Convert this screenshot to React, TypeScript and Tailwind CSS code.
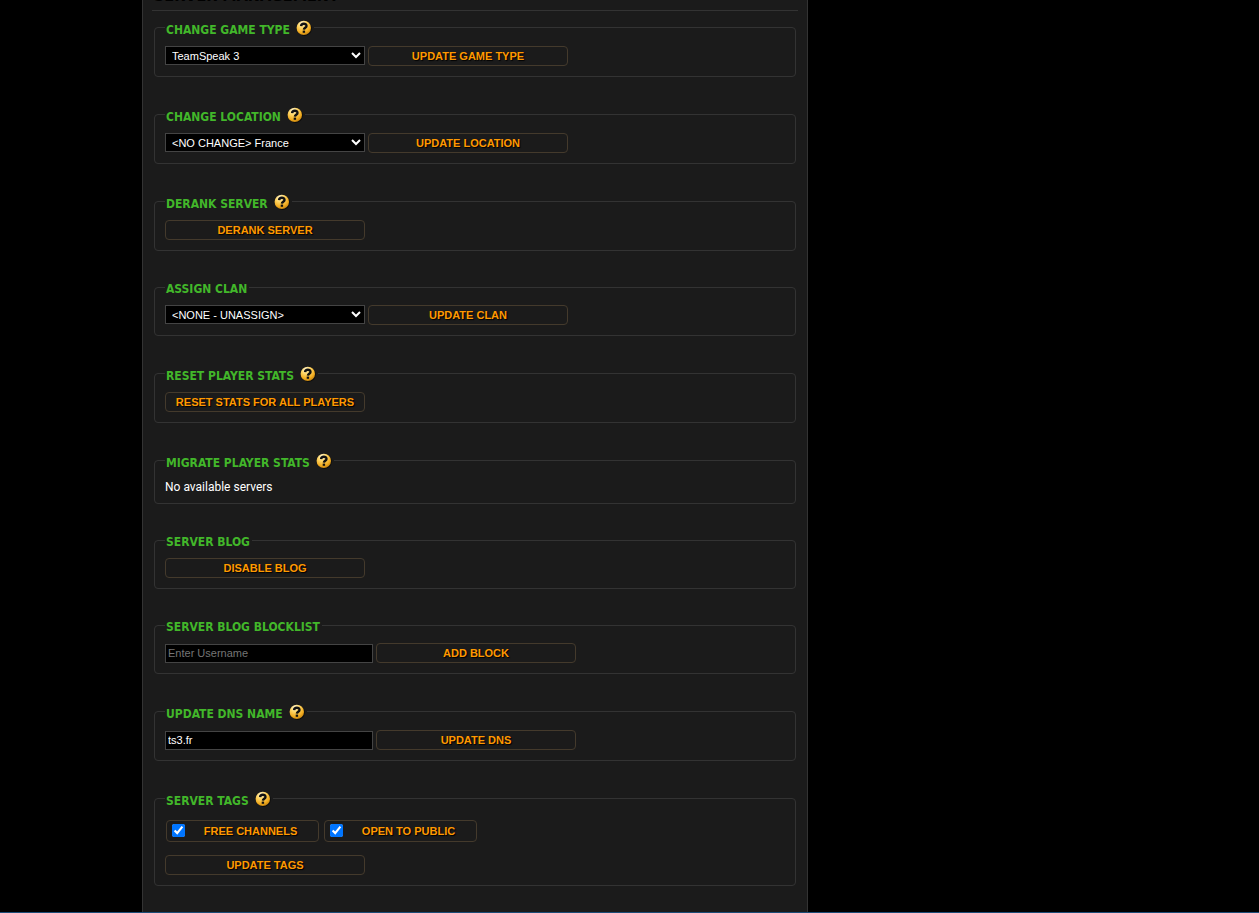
import {ReactNode, useState} from "react";

type SectionProps = {
    title: string;
    help?: boolean;
    children: ReactNode;
}

const HelpIcon = () => (
    <svg className="h-4 w-4 shrink-0" viewBox="0 0 16 16" role="img" aria-label="Help">
        <defs>
            <radialGradient id="help-gold" cx="38%" cy="20%" r="85%">
                <stop offset="0" stopColor="#fff6d8"/>
                <stop offset="0.35" stopColor="#ffd768"/>
                <stop offset="0.75" stopColor="#f0a91c"/>
                <stop offset="1" stopColor="#b87a10"/>
            </radialGradient>
        </defs>
        <circle cx="8.5" cy="8.7" r="7.2" fill="#000" opacity="0.6"/>
        <circle cx="7.8" cy="7.9" r="7.2" fill="url(#help-gold)"/>
        <path d="M5.1 6.1 C5.2 2.9 10.6 2.9 10.5 6 C10.5 7.7 8 7.8 7.9 9.6" fill="none" stroke="#111" strokeWidth="2.4"/>
        <rect x="6.7" y="10.6" width="2.4" height="2.2" fill="#111"/>
    </svg>
);

const Section = ({title, help, children}: SectionProps) => (
    <fieldset className="min-w-0 rounded-[4px] border border-[#333] px-[10px] py-[10px]">
        {help ? (
            <legend className="px-px">
                <span className="flex h-[17px] items-center gap-[6px] pr-px">
                    <span className="pt-[4px] font-['DejaVu_Sans_Condensed','DejaVu_Sans',sans-serif] text-[12px] leading-[14px] font-bold text-[#42b72a]">{title}</span>
                    <HelpIcon/>
                </span>
            </legend>
        ) : (
            <legend className="px-px">
                <span className="flex h-[15px] items-center pt-[2px] pr-px font-['DejaVu_Sans_Condensed','DejaVu_Sans',sans-serif] text-[12px] leading-[14px] font-bold text-[#42b72a]">{title}</span>
            </legend>
        )}
        {children}
    </fieldset>
);

const ActionButton = ({children}: {children: ReactNode}) => (
    <button type="button" className="h-5 w-[200px] rounded-[4px] border border-[#443a2c] text-[11px] leading-[18px] font-bold text-[#ff9900] [text-shadow:1px_1px_1px_#000] hover:bg-[#252525]">
        {children}
    </button>
);

const SelectBox = ({label, options}: {label: string; options: string[]}) => (
    <select aria-label={label} className="h-[19px] w-[200px] border border-[#444] bg-black px-[2px] text-[11px] text-white">
        {options.map(option => <option key={option}>{option}</option>)}
    </select>
);

const TextBox = ({label, placeholder, value}: {label: string; placeholder?: string; value?: string}) => (
    <input type="text" aria-label={label} placeholder={placeholder} defaultValue={value} className="h-[19px] w-[208px] border border-[#444] bg-black px-[2px] pb-[2px] text-[11px] text-white placeholder:text-[#757575]"/>
);

const TagBox = ({name}: {name: string}) => {
    const [checked, setChecked] = useState(true);

    return (
        <label className="flex h-[22px] w-[153px] items-center rounded-[4px] border border-[#443a2c] pr-[2px] pl-[5px]">
            <input type="checkbox" checked={checked} onChange={e => setChecked(e.target.checked)} className="mb-[2px] h-[13px] w-[13px]"/>
            <span className="flex-1 text-center text-[11px] leading-[18px] font-bold text-[#ff9900] [text-shadow:1px_1px_1px_#000]">{name}</span>
        </label>
    );
};

const App = () => {
    return (
        <div className="flex min-h-screen flex-col overflow-hidden border-b border-[#1c4d78] bg-black font-['Liberation_Sans',Arial,sans-serif]">
            <main className="w-full max-w-[666px] flex-1 border-x border-[#333] bg-[#1b1b1b] px-[9px] pb-[26px] md:ml-[142px]">
                <h1 className="-mt-[13px] border-b border-[#333] pb-[5px] pl-[2px] font-['DejaVu_Sans_Condensed','DejaVu_Sans',sans-serif] text-[16px] leading-[18px] font-bold text-black">SERVER MANAGEMENT</h1>

                <div className="flex flex-col gap-[29px] px-[2px] pt-2">
                    <Section title="CHANGE GAME TYPE" help>
                        <div className="flex items-start gap-[3px]">
                            <SelectBox label="Game type" options={["TeamSpeak 3"]}/>
                            <ActionButton>UPDATE GAME TYPE</ActionButton>
                        </div>
                    </Section>

                    <Section title="CHANGE LOCATION" help>
                        <div className="flex items-start gap-[3px]">
                            <SelectBox label="Location" options={["<NO CHANGE> France"]}/>
                            <ActionButton>UPDATE LOCATION</ActionButton>
                        </div>
                    </Section>

                    <Section title="DERANK SERVER" help>
                        <div className="flex">
                            <ActionButton>DERANK SERVER</ActionButton>
                        </div>
                    </Section>

                    <Section title="ASSIGN CLAN">
                        <div className="flex items-start gap-[3px]">
                            <SelectBox label="Clan" options={["<NONE - UNASSIGN>"]}/>
                            <ActionButton>UPDATE CLAN</ActionButton>
                        </div>
                    </Section>

                    <Section title="RESET PLAYER STATS" help>
                        <div className="flex">
                            <ActionButton>RESET STATS FOR ALL PLAYERS</ActionButton>
                        </div>
                    </Section>

                    <Section title="MIGRATE PLAYER STATS" help>
                        <p className="pt-[2px] font-[Roboto,sans-serif] text-[12px] leading-[12px] text-white">No available servers</p>
                    </Section>

                    <Section title="SERVER BLOG">
                        <div className="flex">
                            <ActionButton>DISABLE BLOG</ActionButton>
                        </div>
                    </Section>

                    <Section title="SERVER BLOG BLOCKLIST">
                        <div className="flex items-end gap-[3px]">
                            <TextBox label="Username" placeholder="Enter Username"/>
                            <ActionButton>ADD BLOCK</ActionButton>
                        </div>
                    </Section>

                    <Section title="UPDATE DNS NAME" help>
                        <div className="flex items-end gap-[3px]">
                            <TextBox label="DNS name" value="ts3.fr"/>
                            <ActionButton>UPDATE DNS</ActionButton>
                        </div>
                    </Section>

                    <Section title="SERVER TAGS" help>
                        <div className="flex flex-col gap-[13px] pt-[3px]">
                            <div className="flex gap-[5px] pl-px">
                                <TagBox name="FREE CHANNELS"/>
                                <TagBox name="OPEN TO PUBLIC"/>
                            </div>
                            <div className="flex">
                                <ActionButton>UPDATE TAGS</ActionButton>
                            </div>
                        </div>
                    </Section>
                </div>
            </main>
        </div>
    );
};

export default App;
